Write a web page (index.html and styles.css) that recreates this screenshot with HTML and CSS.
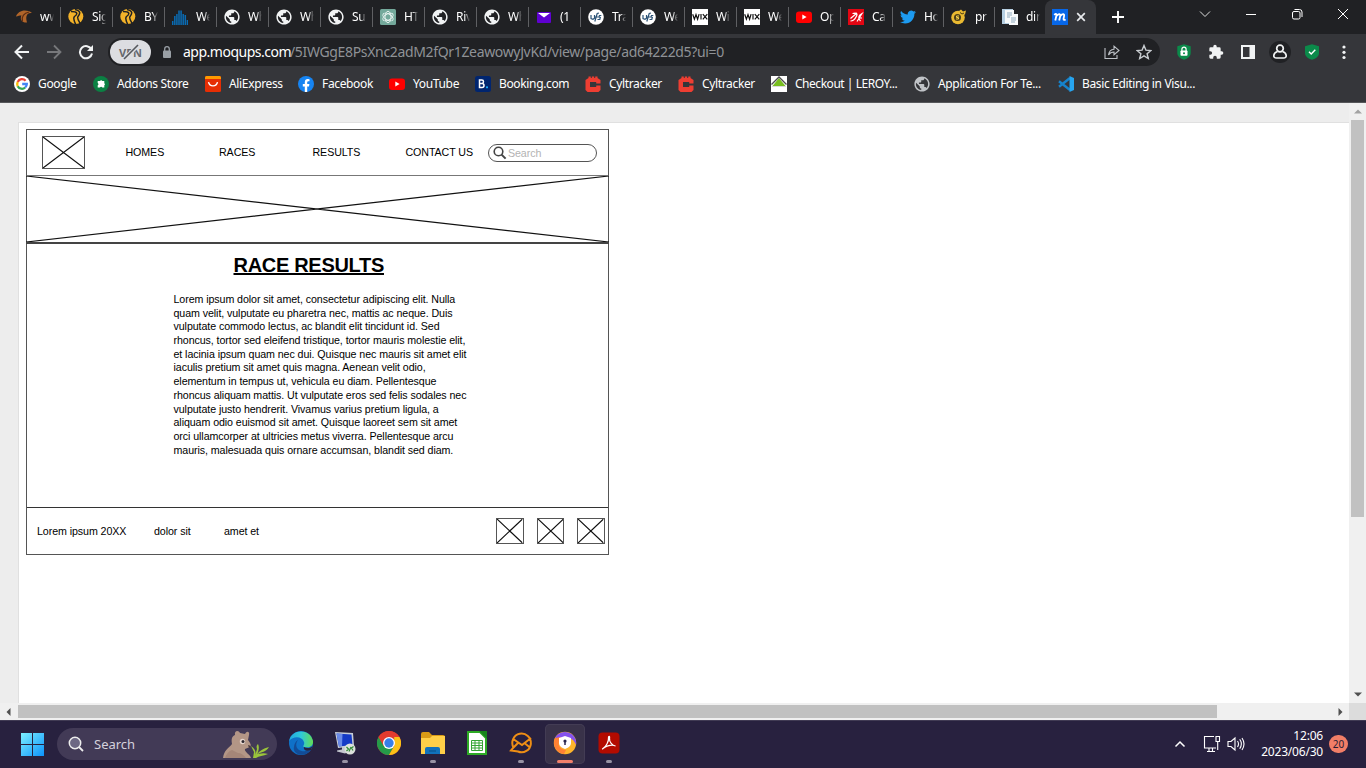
FILE: index.html
```html
<!DOCTYPE html>
<html lang="en">
<head>
<meta charset="utf-8">
<title>Moqups</title>
<link rel="stylesheet" href="styles.css">
</head>
<body>
<svg class="defs" width="0" height="0">
  <symbol id="globe" viewBox="1.500 1.500 21 21"><path fill="currentColor" d="M12 2C6.480 2 2 6.480 2 12s4.480 10 10 10 10-4.480 10-10S17.520 2 12 2zm-1 17.930c-3.950-.49-7-3.850-7-7.930 0-.62.08-1.210.21-1.790L9 15v1c0 1.100.9 2 2 2v1.930zm6.900-2.540c-.26-.81-1-1.390-1.900-1.390h-1v-3c0-.55-.45-1-1-1H8v-2h2c.55 0 1-.45 1-1V7h2c1.100 0 2-.9 2-2v-.41c2.930 1.190 5 4.060 5 7.410 0 2.080-.8 3.970-2.100 5.390z"/></symbol>
  <symbol id="road" viewBox="0 0 16 16"><circle cx="7.800" cy="7.500" r="7.500" fill="#f3b229"/><path d="M3 2.500C10 2.500 10 5 6.500 7.500 4.500 9.500 6.500 13 8 16M7 .5C13.500 2 12 5 10 7.500 8.500 9.500 11.500 13 13 16" fill="none" stroke="#202124" stroke-width="1.500"/></symbol>
  <symbol id="vfs" viewBox="0 0 16 16"><circle cx="8" cy="8" r="7.800" fill="#fff"/><path d="M3 6v3.500l2 .8 1.500-1V6M6.800 12.500l2.400-8L11 4M7 8h3M13.300 6.500h-1.800L10.800 8l1.500.5-.5 2H9.500" fill="none" stroke="#2b5276" stroke-width="1.200"/></symbol>
  <symbol id="wix" viewBox="0 0 16 16"><path fill="#fff" d="M0 0h16v16H0z"/><path d="M.7 5.200l1.700 5L4 5.500l1.600 4.700 1.500-5M9 5v5.500M10.800 5.200l4.500 5.200M15.300 5.200l-4.500 5.200" fill="none" stroke="#111" stroke-width="1.200"/></symbol>
  <symbol id="yt" viewBox="0 0 16 16"><rect y="2.500" width="16" height="11.500" rx="3" fill="#f00"/><path d="M6.300 5.500v5l4.300-2.500z" fill="#fff"/></symbol>
  <symbol id="cyl" viewBox="0 0 16 16"><path d="M3.500 2V.5h2.300V2h1V.5h2.400V2h1V.5h2.300V2L15.500 4v3.500h-4.300V6H5v5h6.200V9.500h4.300V14l-2 2H2.500l-2-2V4z" fill="#ee3e32"/></symbol>
  <symbol id="cross" viewBox="0 0 100 100" preserveAspectRatio="none"><path d="M0 0L100 100M100 0L0 100" fill="none" stroke="#111" stroke-width="1.200" vector-effect="non-scaling-stroke"/></symbol>
</svg>

<div class="tabstrip">
  <div class="tab"><svg viewBox="0 0 16 16"><path d="M0 7.500C2 1.500 10-.5 16 4 11 3.500 9 7 11 13.500 6 14 3.500 10 5.500 6.500 3.500 6.500 2 7 0 7.500z" fill="#b0652a"/><path d="M6.500 12.500C5 8 8 4 13 3" fill="none" stroke="#5c2c12" stroke-width="1.200"/></svg><span>ww</span></div>
  <div class="tab"><svg><use href="#road"/></svg><span>Sig</span></div>
  <div class="tab"><svg><use href="#road"/></svg><span>BY</span></div>
  <div class="tab"><svg viewBox="0 0 16 16"><path d="M.7 16v-4M2.800 16V7M4.900 16V5M7 16V1.500M9.100 16V1.500M11.200 16V5M13.300 16V6M15.400 16v-5" stroke="#0a6cb4" stroke-width="1.500"/></svg><span>We</span></div>
  <div class="tab"><svg class="globe"><use href="#globe"/></svg><span>Wh</span></div>
  <div class="tab"><svg class="globe"><use href="#globe"/></svg><span>Wh</span></div>
  <div class="tab"><svg class="globe"><use href="#globe"/></svg><span>Su</span></div>
  <div class="tab"><svg viewBox="0 0 16 16"><rect width="16" height="16" rx="1.500" fill="#74a99b"/><g fill="none" stroke="#eef6f4" stroke-width=".9"><ellipse cx="8" cy="8" rx="3" ry="5.700"/><ellipse cx="8" cy="8" rx="3" ry="5.700" transform="rotate(60 8 8)"/><ellipse cx="8" cy="8" rx="3" ry="5.700" transform="rotate(120 8 8)"/></g></svg><span>HT</span></div>
  <div class="tab"><svg class="globe"><use href="#globe"/></svg><span>Riv</span></div>
  <div class="tab"><svg class="globe"><use href="#globe"/></svg><span>Wh</span></div>
  <div class="tab"><svg viewBox="0 0 16 16"><rect x="1" y="3" width="14" height="11" rx="1" fill="#5f01d1"/><path d="M2 4h12L8 8.500z" fill="#fff"/></svg><span>(1</span></div>
  <div class="tab"><svg><use href="#vfs"/></svg><span>Tra</span></div>
  <div class="tab"><svg><use href="#vfs"/></svg><span>We</span></div>
  <div class="tab"><svg><use href="#wix"/></svg><span>Wi</span></div>
  <div class="tab"><svg><use href="#wix"/></svg><span>We</span></div>
  <div class="tab"><svg><use href="#yt"/></svg><span>Op</span></div>
  <div class="tab"><svg viewBox="0 0 16 16"><path fill="#e30613" d="M0 0h16v16H0z"/><path d="M4.500 4.500C9 3.500 10 4.500 8 8c-1.500 3-3 4-5.500 4M2.500 9.500L9 4M9 12.500L14 4.500c-4 2-4 5-1.500 7.500M10.500 9h3.500" fill="none" stroke="#fff" stroke-width="1.200"/></svg><span>Ca</span></div>
  <div class="tab"><svg viewBox="0 0 24 24"><path d="M23.950 4.570a10 10 0 0 1-2.820.78 4.960 4.960 0 0 0 2.160-2.730c-.95.560-2 .960-3.120 1.190a4.920 4.920 0 0 0-8.390 4.480A13.900 13.900 0 0 1 1.640 3.160a4.920 4.920 0 0 0 1.520 6.570 4.900 4.900 0 0 1-2.230-.61v.06a4.920 4.920 0 0 0 3.950 4.830 5 5 0 0 1-2.210.08 4.940 4.940 0 0 0 4.600 3.420A9.870 9.870 0 0 1 0 19.540a14 14 0 0 0 7.550 2.210c9.050 0 14-7.500 14-13.980l-.02-.64a9.900 9.900 0 0 0 2.420-2.560z" fill="#1d9bf0"/></svg><span>Ho</span></div>
  <div class="tab"><svg viewBox="0 0 16 16"><circle cx="7" cy="8.500" r="6.800" fill="#e9b931"/><path d="M8 2l2-1.500 2 2 3-1-1 4-3 1z" fill="#e9b931"/><path d="M9 3.500l2 1.500 2-1" fill="none" stroke="#4b3d17"/><circle cx="6.500" cy="8.500" r="3.500" fill="#4b3d17"/><path d="M8 7H5.500v1.500h2V10H5" fill="none" stroke="#f5d04a"/></svg><span>pr</span></div>
  <div class="tab"><svg viewBox="0 0 16 16"><path fill="#b7d0e3" d="M0 0h11v15H0z"/><path fill="#f8fafb" d="M3 1h9v4h4v11H7v-2H3z"/><path d="M5 4h5M5 6h5M5 8h3M9 9h5M9 11h5M9 13h4" stroke="#91aabd"/></svg><span>dir</span></div>
  <div class="tab tab-active"><svg viewBox="0 0 16 16"><path fill="#0767e8" d="M0 0h16v16H0z"/><path d="M2.300 6C4 4 5 5 4.300 7l-1 4.500M4.500 7C7 4 8.700 5 8.200 7l-1 4.500M8.400 7c2.400-3 4.200-2 3.600.5l-.5 2.300c-.1 1.400 1 1.500 2 .5" fill="none" stroke="#fff" stroke-width="1.800"/></svg><svg class="close" viewBox="0 0 10 10"><path d="M1.200 1.200l7.600 7.600M8.800 1.200L1.200 8.800" stroke="#e8eaed" stroke-width="1.700"/></svg></div>
  <svg class="newtab" viewBox="0 0 12 12"><path d="M6 0v12M0 6h12" stroke="#fff" stroke-width="1.900"/></svg>
  <div class="wincontrols">
    <svg viewBox="0 0 12 12"><path d="M1 3.500l5 5 5-5" fill="none" stroke="#ddd"/></svg>
    <svg viewBox="0 0 12 12"><path d="M1 6.500h10" stroke="#fff"/></svg>
    <svg viewBox="0 0 12 12"><rect x="1.500" y="3.500" width="7.500" height="7.500" rx="1.500" fill="none" stroke="#fff"/><path d="M3.500 1.500h5q2.500 0 2.500 2.500v5" fill="none" stroke="#fff"/></svg>
    <svg viewBox="0 0 12 12"><path d="M1 1l10 10M11 1L1 11" stroke="#fff"/></svg>
  </div>
</div>

<div class="toolbar">
  <svg class="nav" viewBox="0 0 16 16"><path d="M15 8H2M8 1.500L1.500 8 8 14.500" fill="none" stroke="#f1f3f4" stroke-width="2"/></svg>
  <svg class="nav" viewBox="0 0 16 16"><path d="M1 8h13M8 1.500L14.500 8 8 14.500" fill="none" stroke="#77787b" stroke-width="1.800"/></svg>
  <svg class="nav" viewBox="0 0 16 16"><path d="M13.500 5.500A6.100 6.100 0 1 0 14 9.500" fill="none" stroke="#f1f3f4" stroke-width="2"/><path d="M15 1v6H9z" fill="#f1f3f4"/></svg>
  <div class="omnibox">
    <div class="vpn"><span>VPN</span><svg viewBox="0 0 16 16"><path d="M1.500 15L15.500 1" stroke="#dcdde1" stroke-width="4"/><path d="M1 15L15 1" stroke="#55585d" stroke-width="1.600"/></svg></div>
    <svg class="lock" viewBox="0 0 10 12"><rect x="1" y="4.500" width="8" height="7.500" rx="1" fill="#9aa0a6"/><path d="M2.700 5V3a2.300 2.300 0 0 1 4.600 0v2" fill="none" stroke="#9aa0a6" stroke-width="1.300"/></svg>
    <div class="url"><span class="host">app.moqups.com</span><span class="path">/5IWGgE8PsXnc2adM2fQr1ZeawowyJvKd/view/page/ad64222d5?ui=0</span></div>
    <svg class="share" viewBox="0 0 16 16"><path d="M1 4v10.500h12V11M4.500 11C5 7 7 5.500 10 5.200V2.200L15 6.500l-5 4.200V8C8 8 6 8.500 4.500 11z" fill="none" stroke="#bdc1c6" stroke-width="1.100"/></svg>
    <svg class="star" viewBox="0 0 16 16"><path d="M8 1.500l1.900 4.600 5 .4-3.800 3.200 1.200 4.800L8 11.900l-4.300 2.600 1.200-4.800L1.100 6.500l5-.4z" fill="none" stroke="#c8ccd0" stroke-width="1.400"/></svg>
  </div>
  <div class="extensions">
    <svg viewBox="0 0 16 16"><path d="M8 .3l6.700 2V9c0 3.500-3 5.500-6.700 6.800C4.300 14.500 1.300 12.500 1.300 9V2.300z" fill="#0b8a4a"/><rect x="4.500" y="6.500" width="7" height="5.300" rx=".8" fill="#fff"/><path d="M5.900 7V5.200a2.100 2.100 0 0 1 4.200 0V7" fill="none" stroke="#fff" stroke-width="1.200"/><circle cx="8" cy="9.200" r="1" fill="#0b8a4a"/></svg>
    <svg viewBox="0 0 24 24"><path d="M20.500 11H19V7a2 2 0 0 0-2-2h-4V3.500a2.500 2.500 0 0 0-5 0V5H4a2 2 0 0 0-2 2v3.800h1.500a2.700 2.700 0 0 1 0 5.400H2V20a2 2 0 0 0 2 2h3.800v-1.500a2.700 2.700 0 0 1 5.400 0V22H17a2 2 0 0 0 2-2v-4h1.500a2.500 2.500 0 0 0 0-5z" fill="#f1f3f4"/></svg>
    <svg viewBox="0 0 16 16"><path d="M1 1h14v14H1zM3 3v10h6.500V3z" fill="#f1f3f4" fill-rule="evenodd"/></svg>
    <svg class="avatar" viewBox="0 0 22 22"><circle cx="11" cy="11" r="11" fill="#202124"/><circle cx="11" cy="7.500" r="3.300" fill="none" stroke="#f1f3f4" stroke-width="1.700"/><path d="M8.500 10.500C4 12 3.500 17 7.500 17h7c4 0 3.500-5-1-6.500" fill="none" stroke="#f1f3f4" stroke-width="1.700"/></svg>
    <svg viewBox="0 0 16 16"><path d="M8 .3l7 2V9c0 3.500-3 5.500-7 6.800C4 14.500 1 12.500 1 9V2.300z" fill="#0b8a4a"/><path d="M5 7.800l2.200 2.300L11.300 5.800" fill="none" stroke="#fff" stroke-width="1.400"/></svg>
    <svg viewBox="0 0 16 16"><g fill="#f1f3f4"><circle cx="8" cy="3" r="1.600"/><circle cx="8" cy="8.300" r="1.600"/><circle cx="8" cy="13.500" r="1.600"/></g></svg>
  </div>
</div>

<div class="bookmarks">
  <div><svg viewBox="0 0 16 16"><circle cx="8" cy="8" r="8" fill="#fff"/><g fill="none" stroke-width="2.300"><path d="M11.600 4.700A4.800 4.800 0 0 0 3.700 5.900" stroke="#ea4335"/><path d="M3.700 5.900a4.800 4.800 0 0 0 0 4.300" stroke="#fbbc05"/><path d="M3.700 10.200a4.800 4.800 0 0 0 7.500 1.300" stroke="#34a853"/><path d="M11.200 11.500A4.800 4.800 0 0 0 12.800 8H8.200" stroke="#4285f4"/></g></svg><span>Google</span></div>
  <div><svg viewBox="0 0 16 16"><circle cx="8" cy="8" r="8" fill="#0b8043"/><path d="M7 5a1.200 1.200 0 0 1 2.300 0h2v2.200a1.200 1.200 0 0 1 0 2v2.300H9.200a1.200 1.200 0 0 0-2.200 0H4.700V9.300a1.200 1.200 0 0 0 0-2.200V5z" fill="#fff"/></svg><span>Addons Store</span></div>
  <div><svg viewBox="0 0 16 16"><rect width="16" height="16" rx="1.500" fill="#e62e04"/><path d="M0 3V1.500Q0 0 1.500 0h13Q16 0 16 1.500V3z" fill="#ff9a00"/><path d="M3.500 6.200a4.600 4.600 0 0 0 9 0" fill="none" stroke="#fff" stroke-width="1.400"/></svg><span>AliExpress</span></div>
  <div><svg viewBox="0 0 16 16"><circle cx="8" cy="8" r="8" fill="#1684f2"/><path d="M6.800 16v-5.500H4.800V8h2V6.300C6.800 4 8 3 9.700 3l1.800.2v2h-1C9.500 5.200 9.200 5.800 9.200 6.500V8h2.200l-.4 2.500H9.200V16z" fill="#fff"/></svg><span>Facebook</span></div>
  <div><svg><use href="#yt"/></svg><span>YouTube</span></div>
  <div><svg viewBox="0 0 16 16"><rect width="16" height="16" rx="2.500" fill="#00256f"/><path d="M4.500 4h2.300q1.700 0 1.700 1.700T6.800 7.500H4.500h2.600q1.900 0 1.900 2T7 11.500H4.500z" fill="none" stroke="#fff" stroke-width="1.500"/><circle cx="12" cy="11.300" r="1.100" fill="#19aeff"/></svg><span>Booking.com</span></div>
  <div><svg><use href="#cyl"/></svg><span>Cyltracker</span></div>
  <div><svg><use href="#cyl"/></svg><span>Cyltracker</span></div>
  <div class="tight"><svg viewBox="0 0 16 16"><path fill="#fff" d="M0 0h16v16H0z"/><path d="M8 2l6.500 8h-13z" fill="#78be20"/><path d="M.5 8.500L8 1l7.500 7.500" fill="none" stroke="#4d4d4d" stroke-width="1.300"/><path d="M1 10.500h14" stroke="#ccc" stroke-width=".7"/></svg><span>Checkout | LEROY...</span></div>
  <div><svg class="globe globe-dim"><use href="#globe"/></svg><span>Application For Te...</span></div>
  <div><svg viewBox="0 0 16 16"><path d="M1 5.300L12 14M1 10.700L12 2" stroke="#1683cb" stroke-width="2.400"/><path d="M11.500 0L16 2v12l-4.500 2z" fill="#27a5f0"/></svg><span>Basic Editing in Visu...</span></div>
</div>

<div class="viewport">
  <div class="page">
    <div class="wireframe">
      <div class="wf-header">
        <svg class="placeholder logo"><use href="#cross"/></svg>
        <span class="link">HOMES</span><span class="link">RACES</span><span class="link">RESULTS</span><span class="link">CONTACT US</span>
        <div class="wf-search"><svg viewBox="0 0 14 14"><circle cx="5.500" cy="5.500" r="4.300" fill="none" stroke="#444" stroke-width="1.600"/><path d="M8.600 8.600l4 4" stroke="#444" stroke-width="2"/></svg><span class="hint">Search</span></div>
      </div>
      <svg class="banner"><use href="#cross"/></svg>
      <div class="wf-body">
        <h1>RACE RESULTS</h1>
        <p>Lorem ipsum dolor sit amet, consectetur adipiscing elit. Nulla<br>quam velit, vulputate eu pharetra nec, mattis ac neque. Duis<br>vulputate commodo lectus, ac blandit elit tincidunt id. Sed<br>rhoncus, tortor sed eleifend tristique, tortor mauris molestie elit,<br>et lacinia ipsum quam nec dui. Quisque nec mauris sit amet elit<br>iaculis pretium sit amet quis magna. Aenean velit odio,<br>elementum in tempus ut, vehicula eu diam. Pellentesque<br>rhoncus aliquam mattis. Ut vulputate eros sed felis sodales nec<br>vulputate justo hendrerit. Vivamus varius pretium ligula, a<br>aliquam odio euismod sit amet. Quisque laoreet sem sit amet<br>orci ullamcorper at ultricies metus viverra. Pellentesque arcu<br>mauris, malesuada quis ornare accumsan, blandit sed diam.</p>
      </div>
      <div class="wf-footer">
        <span class="link">Lorem ipsum 20XX</span><span class="link">dolor sit</span><span class="link">amet et</span>
        <div class="socials">
          <svg class="placeholder"><use href="#cross"/></svg>
          <svg class="placeholder"><use href="#cross"/></svg>
          <svg class="placeholder"><use href="#cross"/></svg>
        </div>
      </div>
    </div>
  </div>
  <div class="vscroll"><svg viewBox="0 0 8 5"><path d="M0 4.500h8L4 .5z" fill="#a3a3a3"/></svg><div class="vthumb"></div><svg class="end" viewBox="0 0 8 5"><path d="M0 .5h8L4 4.500z" fill="#505050"/></svg></div>
  <div class="hscroll"><svg viewBox="0 0 5 8"><path d="M4.500 0v8L.5 4z" fill="#505050"/></svg><div class="hthumb"></div><svg class="end" viewBox="0 0 5 8"><path d="M.5 0v8l4-4z" fill="#505050"/></svg></div>
  <div class="corner"></div>
</div>

<div class="taskbar">
  <svg class="start" viewBox="0 0 23 23"><defs><linearGradient id="win" gradientUnits="userSpaceOnUse" x1="0" y1="0" x2="23" y2="23"><stop stop-color="#7df0ff"/><stop offset="1" stop-color="#0c92fb"/></linearGradient></defs><path d="M0 0h11v11H0zM12 0h11v11H12zM0 12h11v11H0zM12 12h11v11H12z" fill="url(#win)"/></svg>
  <div class="tb-search">
    <svg viewBox="0 0 16 16"><circle cx="7" cy="7" r="5.700" fill="#6d6884" stroke="#eee" stroke-width="1.500"/><path d="M11 11l4 4" stroke="#eee" stroke-width="1.800"/></svg>
    <span>Search</span>
    <svg class="bear" viewBox="0 0 48 28"><path d="M1 28C2 20 7 18 10 14 9 9 10 6 13 5c-1-5 4-5 5-2l5 1c2-4 5-2 4 1l-1 5c2 3 4 5 2 7l-5 2c-1 3 5 5 6 9z" fill="#b39686"/><path d="M10 20c-3 1-6 4-7 8h21c-2-3-5-5-8-5" fill="#a58678"/><circle cx="20.500" cy="11.500" r="2.700" fill="#e6d6cd"/><circle cx="21" cy="11.500" r="1.500" fill="#2e2830"/><path d="M26 15l3 1-2 2z" fill="#443439"/><path d="M31 28l1-6-3-6c5 3 5 7 4 10l2-7c-1-3 0-4 1-5 2 4 0 9-2 12 3-5 6-7 13-9-3 5-8 5-11 7 4-1 7-1 10 0-5 2-9 2-12 4z" fill="#9bc53b"/></svg>
  </div>
  <div class="apps">
    <div class="app"><svg viewBox="0 0 24 24"><defs><linearGradient id="ed" x2="1"><stop stop-color="#22a8df"/><stop offset=".5" stop-color="#2fc8d8"/><stop offset="1" stop-color="#62dc55"/></linearGradient></defs><circle cx="12" cy="12" r="12" fill="#0f71c8"/><path d="M.2 10C2-2 21-3 24 10c.5 6-5 7-9 6-2-1 1-2 0-5C13 5 4 5 .2 10z" fill="url(#ed)"/><path d="M9 9c-5 7 1 14 13 10-7 9-19 4-17-3 0-3 2-6 4-7z" fill="#124c97"/><path d="M15 16c3 2 7 1 8.500-1L22 19c-4 2-8 0-7-3z" fill="#28213f"/></svg></div>
    <div class="app running"><svg viewBox="0 0 24 24"><path d="M2 1l18 1 1 13-16 2z" fill="#c8ced8"/><path d="M3.500 2.500l15 1 1 10.500L6 15.500z" fill="#153ac6"/><path d="M3.500 2.500l6 .4L9 15l-3 .5z" fill="#6b8be8"/><path d="M9 16l4-.5v3l3 2-4 2-8-2v-1l5-1z" fill="#c4c8d0"/><circle cx="17" cy="18" r="5.500" fill="#dce1dc"/><path d="M13.500 16l2 2-2 2M20.500 15.500l-2 1.500 1.500 2.500M16 20.500l2-4.500" stroke="#308c35" stroke-width="1.200" fill="none"/></svg></div>
    <div class="app"><svg viewBox="0 0 24 24"><circle cx="12" cy="12" r="12" fill="#e33b2e"/><path d="M1.600 6A12 12 0 0 0 12 24l5.200-9H6.800z" fill="#259b49"/><path d="M22.400 6A12 12 0 0 1 12 24l5.200-9V6z" fill="#fbc116"/><path d="M12 6h10.400A12 12 0 0 0 1.600 6l5.200 9z" fill="#e33b2e"/><circle cx="12" cy="12" r="6" fill="#fff"/><circle cx="12" cy="12" r="4.700" fill="#377fe9"/></svg></div>
    <div class="app running"><svg viewBox="0 0 24 24"><path d="M0 3q0-2 2-2h6l3 3h11q2 0 2 2v17H0z" fill="#d99a16"/><path d="M0 7h9l2-2h13v18H0z" fill="#ffcf48"/><path d="M4 23v-5q0-2 2-2h11q2 0 2 2v5z" fill="#1171bb"/><path d="M8 20h7" stroke="#084e85"/></svg></div>
    <div class="app"><svg viewBox="0 0 24 24"><path d="M3 1h12l6 6v16H3z" fill="#fff" stroke="#2daa25" stroke-width="2"/><path d="M14 0h8v8z" fill="#18851c"/><path d="M6.500 9.500h11v10h-11zM6.500 12h11M6.500 14.500h11M6.500 17h11M10 9.500v10M14 9.500v10" fill="none" stroke="#36a536"/></svg></div>
    <div class="app running"><svg viewBox="0 0 24 24"><path d="M4.500 16.500A9.300 9.300 0 1 1 9 20.500L2 19.500zM3.500 7.500L13 14l9-7M4.500 16.500L9 12M16 12.500l5 4" fill="none" stroke="#ee8e15" stroke-width="2"/></svg></div>
    <div class="app running current"><svg viewBox="0 0 24 24"><circle cx="12" cy="12" r="11.200" fill="#ffb52b"/><path d="M2 7a11.200 11.200 0 0 1 21 7c-2-7-9-9-15-6z" fill="#8551ee"/><path d="M2 7C-1 14 3 22 11 23l2-4C5 18 4 12 8 6z" fill="#ff8134"/><path d="M12 5l6 2v5c0 3-3 5-6 6-3-1-6-3-6-6V7z" fill="#fff"/><circle cx="12" cy="10" r="1.600" fill="#28264d"/><path d="M12 10v4" stroke="#28264d" stroke-width="1.500"/></svg></div>
    <div class="app running"><svg viewBox="0 0 24 24"><rect x="1.500" y="1.500" width="21" height="21" rx="4" fill="#b30b00"/><path d="M6 17.500c3-2 6-7 5.500-11 0-1.500 1.500-1.500 1 .5-.5 4 3 7.500 6 8-3-1.500-8-.5-11 1.500-2 1.500-2.500 2-1.500 1z" fill="none" stroke="#fff" stroke-width="1.200"/></svg></div>
  </div>
  <div class="tray">
    <svg class="chev" viewBox="0 0 12 12"><path d="M1.500 8.500L6 4l4.500 4.500" fill="none" stroke="#fff" stroke-width="1.500"/></svg>
    <svg class="net" viewBox="0 0 18 18"><path d="M11 1.500H1.500v11.500H13M4 16.500h8M6 13v3.500M9.500 13v3.500M13 1.500h3.500v5H13zM14.700 6.500V15" fill="none" stroke="#fff" stroke-width="1.100"/></svg>
    <svg class="vol" viewBox="0 0 18 18"><path d="M1 6.500v5h3L8 15V3L4 6.500zM10.500 6q2 3 0 6M12.700 4.300q3.300 4.700 0 9.400M15 3q4 6 0 12" fill="none" stroke="#fff" stroke-width="1.100"/></svg>
    <div class="clock"><div>12:06</div><div>2023/06/30</div></div>
    <div class="badge">20</div>
  </div>
</div>
</body>
</html>
```
FILE: styles.css
```css
* { box-sizing: border-box; }
body { margin: 0; width: 1366px; height: 768px; overflow: hidden; display: flex; flex-direction: column; font-family: "Noto Sans", "Open Sans", sans-serif; font-size: 12px; color: #fff; background: #202124; }
svg { display: block; flex: none; }
.defs { position: absolute; }
.globe { color: #f1f3f4; }
.globe-dim { color: #c0c3c7; }

.tabstrip { height: 34px; display: flex; background: #202124; padding-left: 8px; }
.tab { width: 52px; flex: none; height: 34px; display: flex; align-items: center; gap: 8px; padding-left: 8px; }
.tab:nth-child(n+18) { width: 51px; }
.tab svg { width: 16px; height: 16px; }
.tab span { width: 14px; overflow: hidden; white-space: nowrap; line-height: 20px; letter-spacing: -.3px; mask-image: linear-gradient(90deg, #000 60%, transparent); }
.tab + .tab:not(.tab-active) { background: linear-gradient(#5f6063, #5f6063) 0 7px / 1px 20px no-repeat; }
.tab-active { background: #35363a; border-radius: 8px 8px 0 0; padding-left: 7px; }
.tab-active .close { width: 10px; height: 10px; }
.newtab { width: 12px; height: 12px; margin: 11px 0 0 16px; }
.wincontrols { display: flex; gap: 34px; margin: 8px 0 0 auto; padding-right: 17px; }
.wincontrols svg { width: 12px; height: 12px; }

.toolbar { height: 36px; background: #35363a; display: flex; align-items: center; padding: 0 14px; }
.nav { width: 16px; height: 16px; margin-right: 16px; }
.omnibox { width: 1052px; height: 28px; margin-left: -2px; border-radius: 14px; background: #202124; display: flex; align-items: center; padding: 0 8px 0 2px; }
.vpn { width: 41px; height: 24px; border-radius: 12px; background: #dcdde1; color: #66696e; display: grid; place-items: center; font: 700 11px "Open Sans", sans-serif; }
.vpn span, .vpn svg { grid-area: 1 / 1; }
.vpn svg { width: 16px; height: 16px; }
.lock { width: 10px; height: 12px; margin: 0 11px 0 11px; }
.url { font-size: 14px; flex: 1; display: flex; white-space: nowrap; padding-bottom: 1px; }
.host { width: 107px; letter-spacing: -.5px; }
.path { color: #8f9296; letter-spacing: -.34px; }
.share, .star { width: 16px; height: 16px; }
.star { margin-left: 16px; }
.extensions { display: flex; align-items: center; gap: 16px; margin-left: 16px; }
.extensions svg { width: 16px; height: 16px; }
.extensions .avatar { width: 22px; height: 22px; margin: 0 -3px; }

.bookmarks { height: 33px; background: #35363a; border-bottom: 1px solid #56575a; display: grid; grid-template-columns: 79px 112px 93px 91px 86px 110px 93px 93px 143px 144px 200px; padding: 0 0 4px 14px; }
.bookmarks div { display: flex; align-items: center; gap: 8px; white-space: nowrap; letter-spacing: -.35px; }
.bookmarks .tight { letter-spacing: -.47px; }
.bookmarks span { padding-bottom: 1px; }
.bookmarks svg { width: 16px; height: 16px; }

.viewport { height: 617px; display: grid; grid-template-columns: 1349px 17px; grid-template-rows: 600px 17px; background: #ededed; }
.page { margin: 19px 0 0 18px; background: #fff; border: solid #e0e0e0; border-width: 1px 0 0 1px; padding: 6px 0 0 7px; color: #000; font-family: "Liberation Sans", Arial, sans-serif; font-size: 10.670px; letter-spacing: -.08px; }
.wireframe { width: 583px; height: 426px; border: 1px solid #555; display: flex; flex-direction: column; }
.wf-header { flex: none; height: 46px; border-bottom: 1px solid #777; display: grid; grid-template-columns: 98.500px 93.500px 93.500px 93px 82.500px 109px; align-items: center; }
.link, .hint { padding-bottom: 1px; }
.placeholder { border: 1px solid #555; }
.logo { width: 43px; height: 33px; margin-left: 15px; }
.wf-search { height: 18px; border: 1px solid #555; border-radius: 9px; display: flex; align-items: center; color: #b3b3b3; gap: 1px; padding-left: 4px; margin-top: 1px; }
.wf-search svg { width: 14px; height: 14px; }
.banner { width: 583px; height: 68px; margin-left: -1px; border-bottom: 2px solid #444; }
.wf-body { flex: none; height: 263px; padding: 9px 0 0 146.500px; }
h1 { margin: 0; font-size: 20px; line-height: 25px; padding-left: 60px; letter-spacing: -.3px; text-decoration: underline; text-decoration-thickness: 2px; }
p { margin: 15px 0 0; line-height: 13.680px; white-space: nowrap; }
.wf-footer { flex: none; height: 47px; border-top: 1px solid #333; display: grid; grid-template-columns: 117px 70px 272px 110px; padding-left: 10px; align-items: center; }
.socials { display: flex; gap: 13px; }
.socials svg { width: 27.500px; height: 26px; }
.vscroll, .hscroll { background: #f0f0f0; display: flex; align-items: center; }
.vscroll { flex-direction: column; padding: 6px 0; }
.vscroll svg { width: 8px; height: 5px; }
.vthumb { width: 13px; height: 397px; background: #c1c1c1; margin-top: 6px; }
.vscroll .end { margin-top: auto; }
.hscroll { padding: 0 6px; }
.hscroll svg { width: 5px; height: 8px; }
.hthumb { width: 1199px; height: 13px; background: #c1c1c1; margin-left: 7px; }
.hscroll .end { margin-left: auto; }
.corner { background: #dcdcdc; }

.taskbar { height: 48px; background: #28213f; border-top: 1px solid #413b54; display: flex; align-items: center; padding: 0 0 1px 21px; }
.start { width: 23px; height: 23px; }
.tb-search { width: 220px; height: 32px; margin-left: 13px; border-radius: 16px; background: #423a56; display: flex; align-items: center; padding: 0 7px 0 11px; color: #d4d1dc; font-size: 13px; gap: 10px; }
.tb-search svg { width: 16px; height: 16px; }
.tb-search .bear { width: 48px; height: 28px; margin-left: auto; }
.apps { display: flex; gap: 4px; margin-left: 4px; }
.app { width: 40px; height: 40px; border-radius: 5px; display: grid; grid-template-rows: 34px 3px; padding-top: 2px; justify-items: center; align-items: center; }
.app svg { width: 24px; height: 24px; }
.running::after { content: ""; width: 6px; height: 3px; border-radius: 2px; background: #9893a4; }
.current { background: #393249; box-shadow: inset 0 0 0 1px #433c54; }
.current::after { width: 16px; background: #f2806b; }
.tray { margin-left: auto; display: flex; align-items: center; padding-right: 18px; }
.chev { width: 12px; height: 12px; margin-right: 17px; }
.net { width: 18px; height: 18px; margin-right: 6px; }
.vol { width: 18px; height: 18px; margin-right: 14px; }
.clock { width: 64px; text-align: right; line-height: 16px; letter-spacing: -.2px; white-space: nowrap; }
.badge { width: 19px; height: 18px; border-radius: 9px; background: #f17e67; color: #271c33; font-size: 10px; line-height: 18px; text-align: center; margin-left: 6px; }
```
